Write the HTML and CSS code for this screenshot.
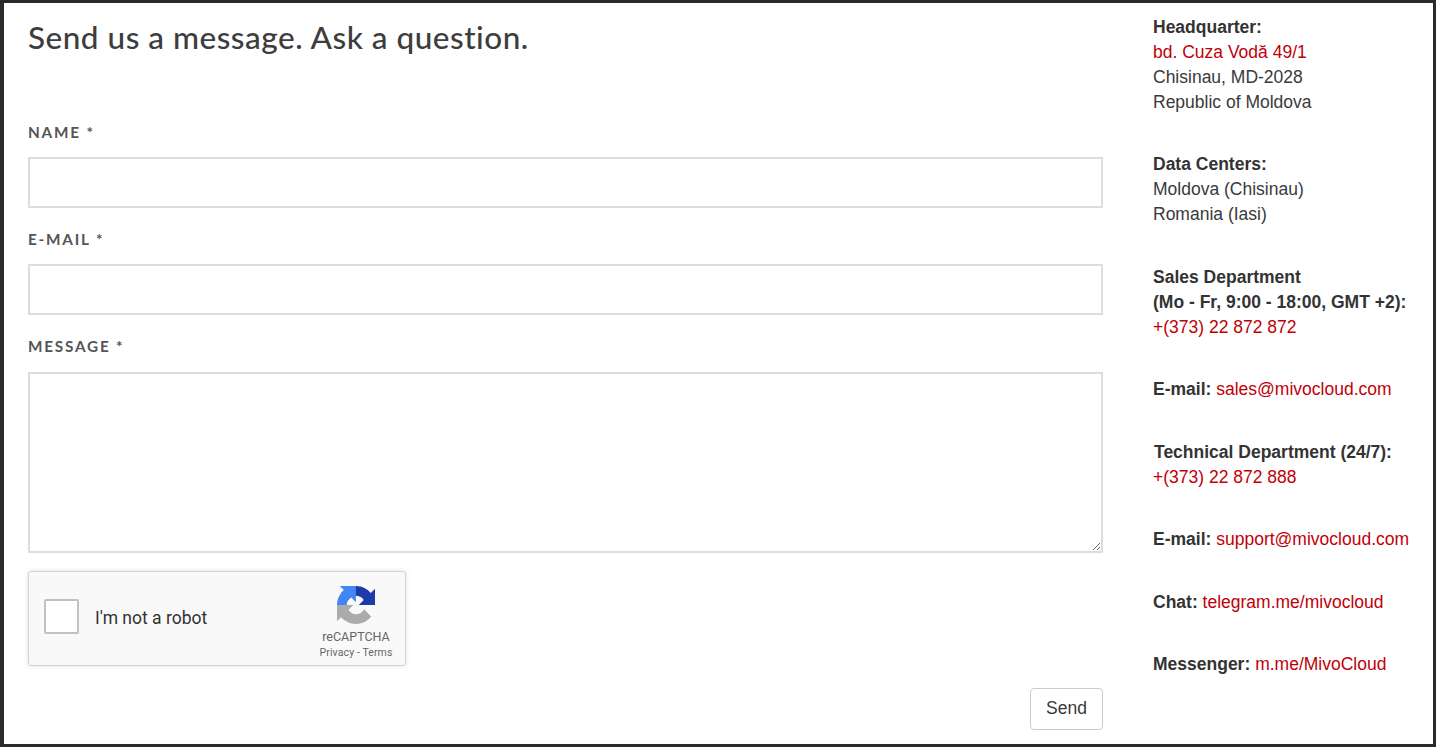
FILE: index.html
```html
<!DOCTYPE html>
<html lang="en">
<head>
<meta charset="utf-8">
<title>Contact</title>
<link rel="stylesheet" href="styles.css">
</head>
<body>
<div class="frame">
  <main class="form-col">
    <h2 class="title">Send us a message. Ask a question.</h2>
    <form class="form">
      <label class="label">NAME *</label>
      <input class="input" type="text">
      <label class="label">E-MAIL *</label>
      <input class="input" type="text">
      <label class="label">MESSAGE *</label>
      <textarea class="input area"></textarea>
      <div class="captcha">
        <span class="check"></span>
        <span class="robot">I'm not a robot</span>
        <div class="brand">
          <svg class="logo" viewBox="0 0 64 64" aria-hidden="true">
            <path d="M64 31.955l-.033-1.37V4.687l-7.16 7.16C50.948 4.674 42.033.093 32.05.093c-10.4 0-19.622 4.96-25.458 12.64l11.736 11.86c1.15-2.127 2.784-3.954 4.764-5.33 2.05-1.6 4.952-2.908 8.958-2.908.484 0 .858.057 1.133.163 4.963.392 9.265 3.13 11.8 7.1l-8.307 8.307c10.523-.04 22.4-.066 27.268.063" fill="#1c3aa9"/>
            <path d="M31.95.001l-1.37.033H4.684l7.16 7.16C4.672 13.05.09 21.968.09 31.95c0 10.4 4.96 19.622 12.64 25.458l11.86-11.736c-2.127-1.15-3.954-2.784-5.33-4.764-1.6-2.05-2.908-4.952-2.908-8.958 0-.484.057-.858.163-1.133.392-4.963 3.13-9.265 7.1-11.8l8.307 8.307c-.04-10.523-.066-22.4.063-27.268" fill="#4285f4"/>
            <path d="M.002 31.95l.033 1.37v25.9l7.16-7.16c5.86 7.17 14.775 11.75 24.76 11.75 10.4 0 19.622-4.96 25.458-12.64l-11.736-11.86c-1.15 2.127-2.784 3.954-4.764 5.33-2.05 1.6-4.952 2.908-8.958 2.908-.484 0-.858-.057-1.133-.163-4.963-.392-9.265-3.13-11.8-7.1l8.307-8.307c-10.523.04-22.4.066-27.268-.063" fill="#ababab"/>
          </svg>
          <span class="brand-name">reCAPTCHA</span>
          <span class="brand-links">Privacy - Terms</span>
        </div>
      </div>
      <div class="actions"><button class="send" type="button">Send</button></div>
    </form>
  </main>
  <aside class="info">
    <p class="block"><b>Headquarter:</b><br><a class="link">bd. Cuza Vodă 49/1</a><br>Chisinau, MD-2028<br>Republic of Moldova</p>
    <p class="block"><b>Data Centers:</b><br>Moldova (Chisinau)<br>Romania (Iasi)</p>
    <p class="block"><b>Sales Department<br>(Mo - Fr, 9:00 - 18:00, GMT +2):</b><br><a class="link">+(373) 22 872 872</a></p>
    <p class="block"><b>E-mail:</b> <a class="link">sales@mivocloud.com</a></p>
    <p class="block"><b class="nudge">Technical Department (24/7):</b><br><a class="link">+(373) 22 872 888</a></p>
    <p class="block"><b>E-mail:</b> <a class="link">support@mivocloud.com</a></p>
    <p class="block"><b>Chat:</b> <a class="link">telegram.me/mivocloud</a></p>
    <p class="block"><b>Messenger:</b> <a class="link">m.me/MivoCloud</a></p>
  </aside>
</div>
</body>
</html>
```
FILE: styles.css
```css
* { box-sizing: border-box; }
html, body { margin: 0; height: 100%; }
body { background: #fff; overflow: hidden; }
.frame {
  width: 1436px;
  height: 747px;
  border: solid #2b2b2b;
  border-width: 3px 3px 3px 4px;
  display: flex;
  background: #fff;
  font-family: "Liberation Sans", Arial, sans-serif;
  color: #3a3a3a;
}
.form-col { width: 1075px; margin-left: 24px; flex: none; }
.title {
  margin: 0;
  padding-top: 15px;
  font: 500 31.5px/38px Lato, sans-serif;
  letter-spacing: 0.5px;
  color: #3d3d3d;
}
.form { display: flex; flex-direction: column; margin-top: 66px; }
.label {
  font: 700 15.3px/20px Lato, sans-serif;
  letter-spacing: 1.8px;
  color: #555;
  margin-bottom: 15px;
}
.input {
  display: block;
  width: 100%;
  height: 51px;
  border: 2px solid #ddd;
  background: #fff;
  margin-bottom: 21px;
  padding: 0;
}
.area { height: 181px; margin-top: 1px; margin-bottom: 18px; resize: vertical; }
.captcha {
  width: 378px;
  height: 95px;
  display: flex;
  align-items: center;
  background: #f9f9f9;
  border: 1px solid #d3d3d3;
  border-radius: 3px;
  box-shadow: 0 0 4px 1px rgba(0, 0, 0, 0.08);
  padding-left: 15px;
  font-family: Roboto, sans-serif;
}
.check {
  width: 35px;
  height: 35px;
  margin-bottom: 4px;
  background: #fff;
  border: 2px solid #c1c1c1;
  border-radius: 2px;
  flex: none;
}
.robot { margin-left: 16px; margin-bottom: 2px; font-size: 17.5px; color: #333; }
.brand {
  margin-left: auto;
  width: 88px;
  margin-right: 5px;
  align-self: flex-start;
  padding-top: 14px;
  display: flex;
  flex-direction: column;
  align-items: center;
  color: #666;
}
.logo { width: 38px; height: 38px; display: block; margin-bottom: 5px; }
.brand-name { font-size: 12.5px; line-height: 15px; }
.brand-links { font-size: 10.5px; line-height: 15px; margin-top: 1px; letter-spacing: 0.1px; }
.actions { display: flex; justify-content: flex-end; margin-top: 22px; }
.send {
  width: 73px;
  height: 42px;
  background: #fff;
  border: 1px solid #ccc;
  border-radius: 4px;
  font: 17.5px "Liberation Sans", Arial, sans-serif;
  color: #3a3a3a;
  padding: 0 0 2px;
}
.info {
  margin-left: 50px;
  padding-top: 11.5px;
  display: flex;
  flex-direction: column;
  gap: 37.5px;
  font-size: 17.5px;
  line-height: 25px;
  white-space: nowrap;
}
.block { margin: 0; }
.block b { color: #333; }
.link { color: #bf0008; }
.nudge { margin-left: 1px; }
```
